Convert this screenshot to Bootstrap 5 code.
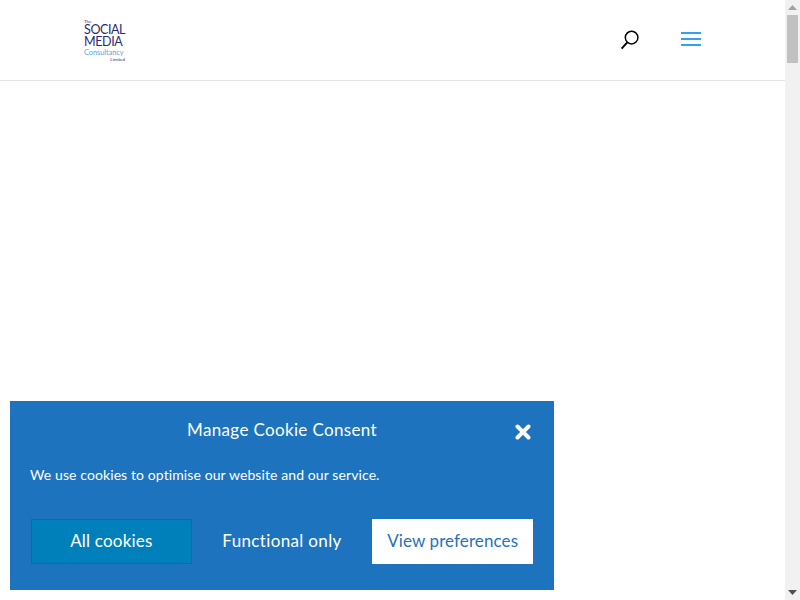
<!DOCTYPE html>
<html lang="en">
<head>
<meta charset="utf-8">
<title>The Social Media Consultancy</title>
<link href="https://cdn.jsdelivr.net/npm/bootstrap@5.3.0/dist/css/bootstrap.min.css" rel="stylesheet">
<style>
html,body{height:100%;overflow:hidden;background:#fff}
body{font-family:"Lato","Liberation Sans",sans-serif}
.page-shell{height:600px}
.site-head{height:81px;border-bottom:1px solid #e5e5e5;padding:0 84px 0 84px}
.brand-logo{width:41px;line-height:1;color:#2b2a77;margin-bottom:2.5px}
.brand-logo span{display:block;white-space:nowrap}
.lg-the{font-size:4.5px;line-height:11px;height:8px}
.lg-main{font-size:12.5px;line-height:12.5px;height:12.5px;letter-spacing:-.4px}
.lg-sub{font-size:7.5px;line-height:8px;height:8px;color:#62a2e2;letter-spacing:-.1px}
.lg-ltd{font-size:4.5px;line-height:5px;height:5px;text-align:right}
.head-tools{gap:41px}
.search-ico{width:20px;height:20px;display:block}
.burger{width:20px;display:flex;flex-direction:column;gap:4px;margin-top:-2px}
.burger i{display:block;height:2px;background:#2ea3f2}
.fake-scroll{width:15px;background:#f1f1f1;flex:none}
.scroll-thumb{width:11px;height:48px;background:#c1c1c1;margin:0 auto}
.scroll-arrow{height:15px;display:flex;align-items:center;justify-content:center}
.cookie-panel{position:fixed;left:10px;top:401px;width:544px;height:189px;background:#1e73be;color:#fff;padding:0 21px 26px}
.cookie-top{height:59px}
.cookie-title{font-size:17px;letter-spacing:.35px;line-height:1;margin-top:-2px}
.cookie-close{position:absolute;right:23px;top:23px;width:16px;height:16px;display:block}
.cookie-text{font-size:14px;letter-spacing:.1px;line-height:20px;margin:5px 0 0 -1px}
.cookie-btns{display:grid;grid-template-columns:repeat(3,1fr);gap:10px;margin-top:auto}
.cookie-btn{height:45px;font-size:17px;letter-spacing:.2px;border-radius:0;padding:0 0 2px;color:#fff;border:1px solid transparent;--bs-btn-hover-color:#fff}
.btn-all{background:#0080bb;border-color:#006fa8}
.btn-func{background:transparent;letter-spacing:.35px}
.btn-pref{background:#fff;color:#1e73be;border-color:#fff;letter-spacing:.1px}
</style>
</head>
<body>
<div class="page-shell d-flex">
  <div class="flex-grow-1">
    <header class="site-head d-flex align-items-center justify-content-between">
      <div class="brand-logo">
        <span class="lg-the">The</span>
        <span class="lg-main">SOCIAL</span>
        <span class="lg-main">MEDIA</span>
        <span class="lg-sub">Consultancy</span>
        <span class="lg-ltd">Limited</span>
      </div>
      <div class="head-tools d-flex align-items-center">
        <svg class="search-ico" viewBox="0 0 20 20" fill="none" stroke="#000" stroke-width="1.5" aria-hidden="true"><circle cx="11.6" cy="7.6" r="6.3"/><path d="M7.3 12.3 1.6 18.6" stroke-width="2"/></svg>
        <div class="burger"><i></i><i></i><i></i></div>
      </div>
    </header>
  </div>
  <aside class="fake-scroll">
    <div class="scroll-arrow"><svg width="9" height="5" viewBox="0 0 9 5" aria-hidden="true"><path d="M4.5 0 9 5H0z" fill="#a3a3a3"/></svg></div>
    <div class="scroll-thumb"></div>
  </aside>
</div>
<div class="fake-scroll position-fixed end-0 bottom-0 bg-transparent">
  <div class="scroll-arrow"><svg width="9" height="5" viewBox="0 0 9 5" aria-hidden="true"><path d="M0 0H9L4.500 5z" fill="#505050"/></svg></div>
</div>
<section class="cookie-panel d-flex flex-column">
  <div class="cookie-top d-flex align-items-center justify-content-center">
    <div class="cookie-title">Manage Cookie Consent</div>
    <svg class="cookie-close" viewBox="0 0 16 16" aria-hidden="true"><path d="M2.500 2.500 13.500 13.500M13.500 2.500 2.500 13.500" stroke="#fff" stroke-width="4" stroke-linecap="round"/></svg>
  </div>
  <p class="cookie-text">We use cookies to optimise our website and our service.</p>
  <div class="cookie-btns">
    <button type="button" class="btn cookie-btn btn-all">All cookies</button>
    <button type="button" class="btn cookie-btn btn-func">Functional only</button>
    <button type="button" class="btn cookie-btn btn-pref">View preferences</button>
  </div>
</section>
<script src="https://cdn.jsdelivr.net/npm/bootstrap@5.3.0/dist/js/bootstrap.bundle.min.js"></script>
</body>
</html>
